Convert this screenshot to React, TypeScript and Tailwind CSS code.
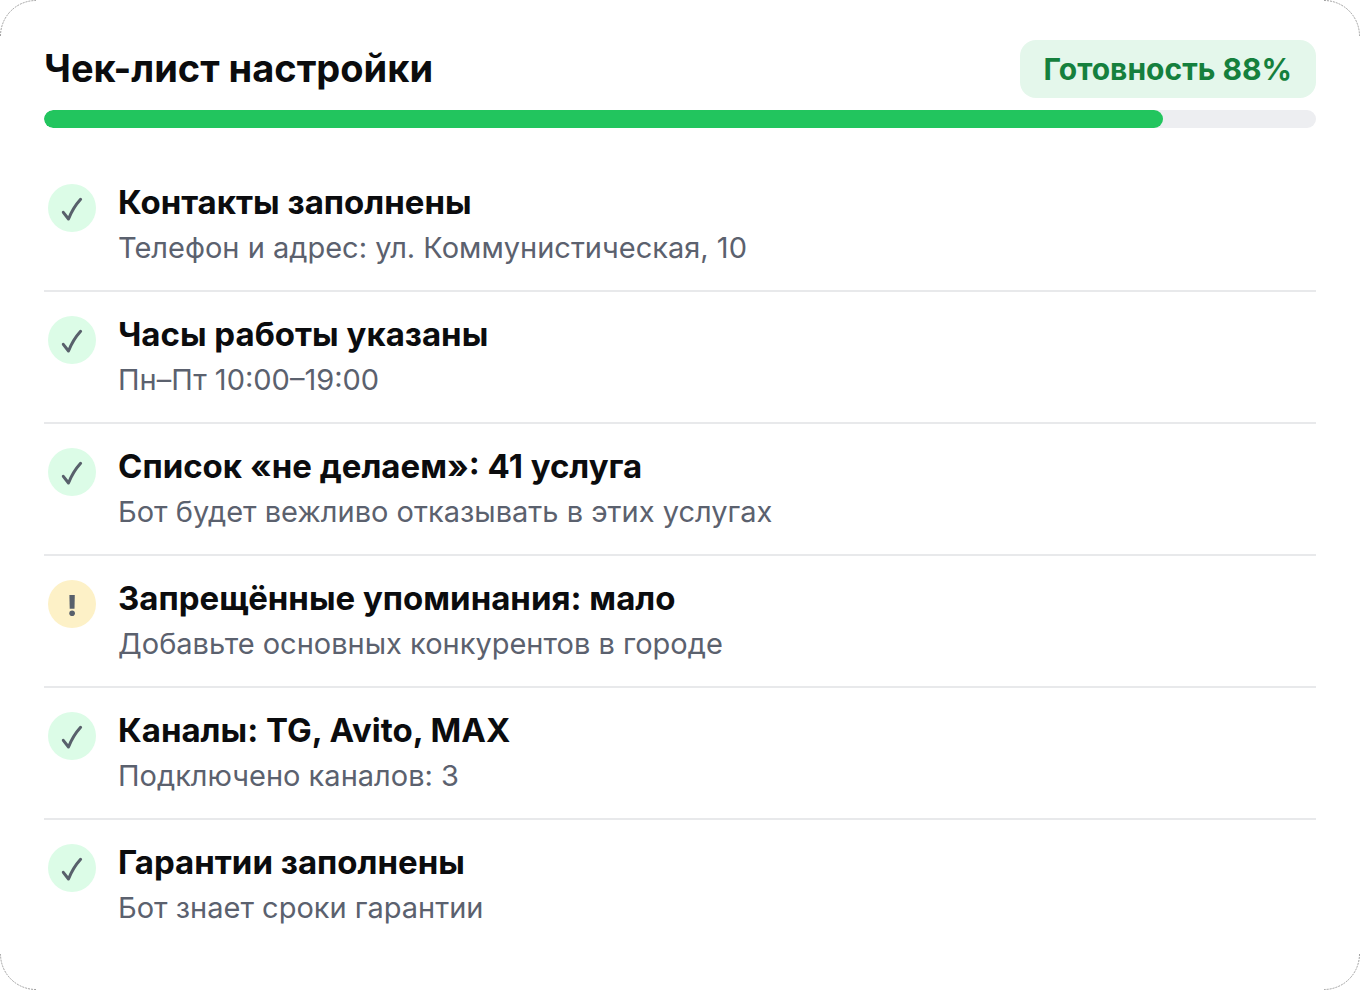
type Status = 'done' | 'warning';

interface ChecklistItem {
  title: string;
  description: string;
  status: Status;
}

const READINESS = 88;

const ITEMS: ChecklistItem[] = [
  { title: 'Контакты заполнены', description: 'Телефон и адрес: ул. Коммунистическая, 10', status: 'done' },
  { title: 'Часы работы указаны', description: 'Пн–Пт 10:00–19:00', status: 'done' },
  { title: 'Список «не делаем»: 41 услуга', description: 'Бот будет вежливо отказывать в этих услугах', status: 'done' },
  { title: 'Запрещённые упоминания: мало', description: 'Добавьте основных конкурентов в городе', status: 'warning' },
  { title: 'Каналы: TG, Avito, MAX', description: 'Подключено каналов: 3', status: 'done' },
  { title: 'Гарантии заполнены', description: 'Бот знает сроки гарантии', status: 'done' },
];

const CORNERS = [
  'left-0 top-0',
  'right-0 top-0 rotate-90',
  'right-0 bottom-0 rotate-180',
  'left-0 bottom-0 -rotate-90',
];

function StatusIcon({ status }: { status: Status }) {
  const done = status === 'done';

  return (
    <span
      className={`flex size-12 shrink-0 items-center justify-center rounded-full text-[#58606b] ${
        done ? 'bg-[#dcfce7]' : 'bg-[#fdf1c7]'
      }`}
    >
      <svg viewBox="0 0 48 48" className="size-12" fill="currentColor" aria-hidden="true">
        {done ? (
          <path
            d="M15.300 28.300L20.500 35C23.500 27.500 27 21.500 32.600 15.300"
            fill="none"
            stroke="currentColor"
            strokeWidth="3"
            strokeLinecap="round"
            strokeLinejoin="round"
          />
        ) : (
          <>
            <path d="M21.400 15h5.400l-.3 13.800h-4.800z" />
            <circle cx="24.100" cy="33.300" r="2.800" />
          </>
        )}
      </svg>
    </span>
  );
}

export default function App() {
  return (
    <main className="relative bg-white px-11 py-10 font-['Inter','Liberation_Sans',sans-serif] text-[#0b0c0e]">
      {CORNERS.map((position) => (
        <svg
          key={position}
          viewBox="0 0 36 36"
          className={`absolute size-9 text-[#8a8a8a] ${position}`}
          fill="none"
          stroke="currentColor"
          aria-hidden="true"
        >
          <path d="M.5 36A35.500 35.500 0 0 1 36 .5" strokeDasharray="2 1" strokeWidth="0.8" />
        </svg>
      ))}

      <header className="flex items-start justify-between">
        <h1 className="text-[38px] leading-14 font-bold">Чек-лист настройки</h1>
        <span className="rounded-2xl bg-[#e4f7eb] px-6 text-[30px] leading-[58px] font-bold text-[#15803d]">
          Готовность {READINESS}%
        </span>
      </header>

      <div
        role="progressbar"
        aria-label="Готовность"
        aria-valuenow={READINESS}
        aria-valuemin={0}
        aria-valuemax={100}
        className="mt-3 h-[18px] overflow-hidden rounded-full bg-[#edeef1]"
      >
        <div className="h-full rounded-full bg-[#22c55e]" style={{ width: `${READINESS}%` }} />
      </div>

      <ul className="mt-8 divide-y-2 divide-[#e8e9eb]">
        {ITEMS.map((item) => (
          <li key={item.title} className="flex gap-[22px] py-6 pl-1">
            <StatusIcon status={item.status} />
            <div>
              <h2 className="text-[33px] leading-9 font-bold">{item.title}</h2>
              <p className="mt-2.5 text-[29px] leading-9 text-[#5b616e]">{item.description}</p>
            </div>
          </li>
        ))}
      </ul>
    </main>
  );
}
